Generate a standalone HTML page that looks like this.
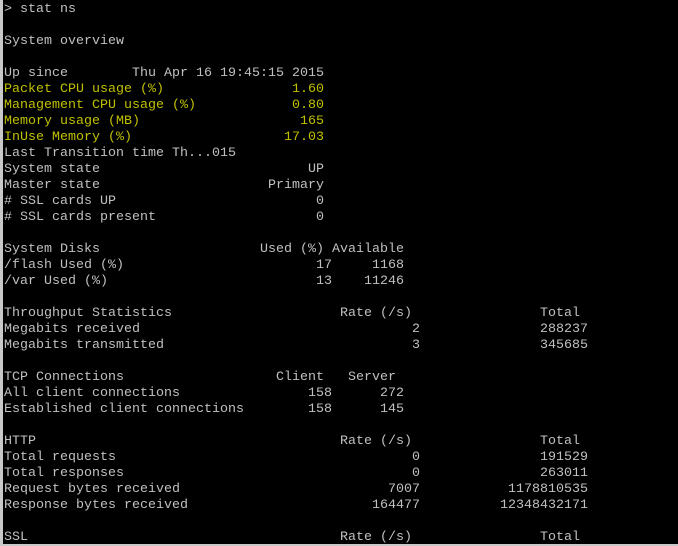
<!DOCTYPE html>
<html><head><style>
html,body{margin:0;padding:0;background:#000;width:678px;height:546px;overflow:hidden}
#t{position:absolute;left:0;top:0;width:678px;height:546px;background:#000;box-sizing:border-box;border-left:3px solid #c8c8c8;border-bottom:2px solid #c8c8c8}
.l{position:absolute;left:4px;height:16px;line-height:16px;font-family:"Liberation Mono",monospace;font-size:13.33px;color:#c0c0c0;white-space:pre;width:674px;margin-top:2px}
.y{color:#c0c000}
.l span{position:absolute;top:0}
</style></head><body><div id="t"></div>
<div class="l" style="top:0">&gt; stat ns</div>
<div class="l" style="top:32px">System overview</div>
<div class="l" style="top:64px">Up since<span style="left:128px">Thu Apr 16 19:45:15 2015</span></div>
<div class="l y" style="top:80px">Packet CPU usage (%)<span style="right:354px">1.60</span></div>
<div class="l y" style="top:96px">Management CPU usage (%)<span style="right:354px">0.80</span></div>
<div class="l y" style="top:112px">Memory usage (MB)<span style="right:354px">165</span></div>
<div class="l y" style="top:128px">InUse Memory (%)<span style="right:354px">17.03</span></div>
<div class="l" style="top:144px">Last Transition time Th...015</div>
<div class="l" style="top:160px">System state<span style="right:354px">UP</span></div>
<div class="l" style="top:176px">Master state<span style="right:354px">Primary</span></div>
<div class="l" style="top:192px"># SSL cards UP<span style="right:354px">0</span></div>
<div class="l" style="top:208px"># SSL cards present<span style="right:354px">0</span></div>
<div class="l" style="top:240px">System Disks<span style="left:256px">Used (%)</span><span style="left:328px">Available</span></div>
<div class="l" style="top:256px">/flash Used (%)<span style="right:346px">17</span><span style="right:274px">1168</span></div>
<div class="l" style="top:272px">/var Used (%)<span style="right:346px">13</span><span style="right:274px">11246</span></div>
<div class="l" style="top:304px">Throughput Statistics<span style="left:336px">Rate (/s)</span><span style="left:536px">Total</span></div>
<div class="l" style="top:320px">Megabits received<span style="right:258px">2</span><span style="right:90px">288237</span></div>
<div class="l" style="top:336px">Megabits transmitted<span style="right:258px">3</span><span style="right:90px">345685</span></div>
<div class="l" style="top:368px">TCP Connections<span style="left:272px">Client</span><span style="left:344px">Server</span></div>
<div class="l" style="top:384px">All client connections<span style="right:346px">158</span><span style="right:274px">272</span></div>
<div class="l" style="top:400px">Established client connections<span style="right:346px">158</span><span style="right:274px">145</span></div>
<div class="l" style="top:432px">HTTP<span style="left:336px">Rate (/s)</span><span style="left:536px">Total</span></div>
<div class="l" style="top:448px">Total requests<span style="right:258px">0</span><span style="right:90px">191529</span></div>
<div class="l" style="top:464px">Total responses<span style="right:258px">0</span><span style="right:90px">263011</span></div>
<div class="l" style="top:480px">Request bytes received<span style="right:258px">7007</span><span style="right:90px">1178810535</span></div>
<div class="l" style="top:496px">Response bytes received<span style="right:258px">164477</span><span style="right:90px">12348432171</span></div>
<div class="l" style="top:528px">SSL<span style="left:336px">Rate (/s)</span><span style="left:536px">Total</span></div>
</body></html>
